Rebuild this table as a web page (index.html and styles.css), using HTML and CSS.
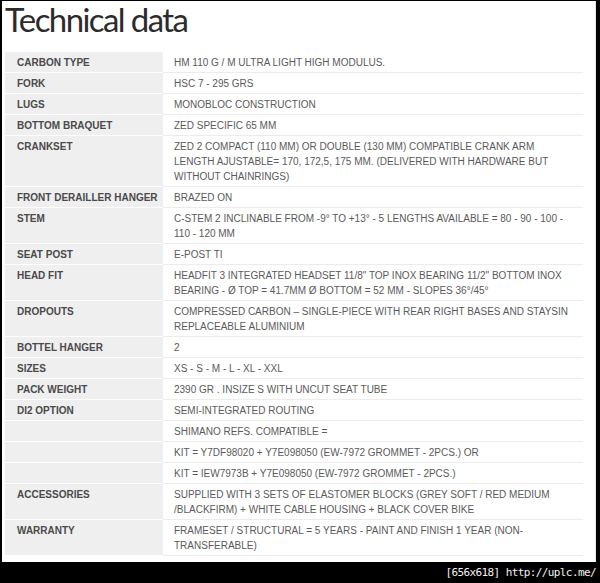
FILE: index.html
```html
<!DOCTYPE html>
<html>
<head>
<meta charset="utf-8">
<link rel="stylesheet" href="styles.css">
</head>
<body>
<div class="frame">
  <div class="page">
    <h1 class="title">Technical data</h1>
    <table class="spec">
      <colgroup><col class="c-label"><col class="c-value"></colgroup>
      <tr><th>CARBON TYPE</th><td>HM 110 G / M ULTRA LIGHT HIGH MODULUS.</td></tr>
      <tr><th>FORK</th><td>HSC 7 - 295 GRS</td></tr>
      <tr><th>LUGS</th><td>MONOBLOC CONSTRUCTION</td></tr>
      <tr><th>BOTTOM BRAQUET</th><td>ZED SPECIFIC 65 MM</td></tr>
      <tr><th>CRANKSET</th><td>ZED 2 COMPACT (110 MM) OR DOUBLE (130 MM) COMPATIBLE CRANK ARM<br>LENGTH AJUSTABLE= 170, 172,5, 175 MM. (DELIVERED WITH HARDWARE BUT<br>WITHOUT CHAINRINGS)</td></tr>
      <tr><th>FRONT DERAILLER HANGER</th><td>BRAZED ON</td></tr>
      <tr><th>STEM</th><td>C-STEM 2 INCLINABLE FROM -9° TO +13° - 5 LENGTHS AVAILABLE = 80 - 90 - 100 -<br>110 - 120 MM</td></tr>
      <tr><th>SEAT POST</th><td>E-POST TI</td></tr>
      <tr><th>HEAD FIT</th><td>HEADFIT 3 INTEGRATED HEADSET 11/8" TOP INOX BEARING 11/2" BOTTOM INOX<br>BEARING - Ø TOP = 41.7MM Ø BOTTOM = 52 MM - SLOPES 36°/45°</td></tr>
      <tr><th>DROPOUTS</th><td>COMPRESSED CARBON – SINGLE-PIECE WITH REAR RIGHT BASES AND STAYSIN<br>REPLACEABLE ALUMINIUM</td></tr>
      <tr><th>BOTTEL HANGER</th><td>2</td></tr>
      <tr><th>SIZES</th><td>XS - S - M - L - XL - XXL</td></tr>
      <tr><th>PACK WEIGHT</th><td>2390 GR . INSIZE S WITH UNCUT SEAT TUBE</td></tr>
      <tr><th>DI2 OPTION</th><td>SEMI-INTEGRATED ROUTING</td></tr>
      <tr><th></th><td>SHIMANO REFS. COMPATIBLE =</td></tr>
      <tr><th></th><td>KIT = Y7DF98020 + Y7E098050 (EW-7972 GROMMET - 2PCS.) OR</td></tr>
      <tr><th></th><td>KIT = IEW7973B + Y7E098050 (EW-7972 GROMMET - 2PCS.)</td></tr>
      <tr><th>ACCESSORIES</th><td>SUPPLIED WITH 3 SETS OF ELASTOMER BLOCKS (GREY SOFT / RED MEDIUM<br>/BLACKFIRM) + WHITE CABLE HOUSING + BLACK COVER BIKE</td></tr>
      <tr><th>WARRANTY</th><td>FRAMESET / STRUCTURAL = 5 YEARS - PAINT AND FINISH 1 YEAR (NON-<br>TRANSFERABLE)</td></tr>
    </table>
  </div>
  <div class="stamp">[656x618] http://uplc.me/</div>
</div>
</body>
</html>
```

FILE: styles.css
```css
html, body {
  margin: 0;
  padding: 0;
  background: #000;
}
.frame {
  width: 600px;
  height: 583px;
  background: #000;
  overflow: hidden;
}
.page {
  margin: 1px 0 0 2px;
  width: 594px;
  height: 561px;
  background: #fff;
  border-right: 1px solid #e6e6e6;
  padding: 0 0 0 3px;
  box-sizing: border-box;
}
.title {
  margin: 0;
  padding: 0;
  height: 51px;
  font-family: "Lato", "Liberation Sans", sans-serif;
  font-weight: 400;
  font-size: 33px;
  line-height: 36px;
  letter-spacing: -1.6px;
  color: #2b2b2b;
}
.spec {
  border-collapse: collapse;
  table-layout: fixed;
  width: 578px;
  font-family: "Liberation Sans", Arial, sans-serif;
  font-size: 10px;
  line-height: 15px;
}
.c-label {
  width: 158px;
}
.spec th, .spec td {
  padding: 3px 0 2px 0;
  vertical-align: top;
  text-align: left;
  white-space: nowrap;
}
.spec th {
  padding-left: 12px;
  background: #efefef;
  color: #4a4a4a;
  font-weight: bold;
  border-bottom: 1px solid #fff;
}
.spec td {
  padding-left: 11px;
  color: #5a5a5a;
  border-bottom: 1px solid #ececec;
}
.stamp {
  height: 21px;
  padding-right: 4px;
  text-align: right;
  font-family: "DejaVu Sans Mono", monospace;
  font-size: 11px;
  line-height: 21px;
  letter-spacing: -0.6px;
  color: #f2f2f2;
}
```
